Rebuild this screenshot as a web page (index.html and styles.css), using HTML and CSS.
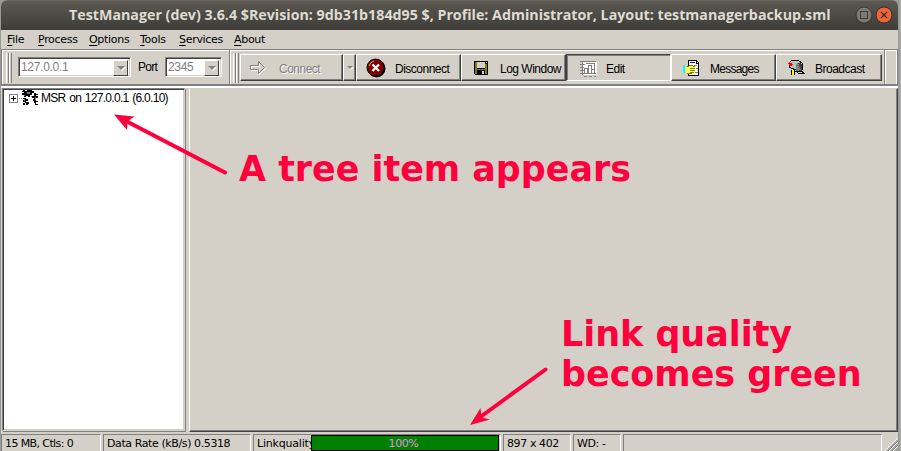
FILE: index.html
```html
<!DOCTYPE html>
<html lang="en">
<head>
<meta charset="utf-8">
<title>TestManager</title>
<link rel="stylesheet" href="styles.css">
</head>
<body>
<div class="window">
  <header class="titlebar">
    <span class="title">TestManager (dev) 3.6.4 $Revision: 9db31b184d95 $, Profile: Administrator, Layout: testmanagerbackup.sml</span>
    <svg class="winbtns" width="38" height="18" viewBox="0 0 38 18">
      <circle cx="9" cy="9" r="8" fill="#7c7a72" stroke="#34332e"/><rect x="5.500" y="5.500" width="7" height="7" fill="none" stroke="#3c3b37"/>
      <circle cx="29" cy="9" r="8" fill="#ee6638" stroke="#34332e"/><path d="M26 6l6 6m0-6l-6 6" stroke="#44281c" stroke-width="1.2"/>
    </svg>
  </header>
  <nav class="menu">
    <span class="m1"><u>F</u>ile</span><span class="m2"><u>P</u>rocess</span><span class="m3"><u>O</u>ptions</span><span class="m4"><u>T</u>ools</span><span class="m5"><u>S</u>ervices</span><span class="m6"><u>A</u>bout</span>
  </nav>
  <div class="toolbar">
    <div class="band address">
      <i class="grip"></i>
      <div class="combo host"><span>127.0.0.1</span><b></b></div>
      <span class="port">Port</span>
      <div class="combo portbox"><span>2345</span><b></b></div>
    </div>
    <div class="band actions">
      <i class="grip"></i>
      <div class="btn connect disabled">
        <svg class="ico" width="17" height="16" viewBox="0 0 17 16"><path d="M1.500 6.500h8v-4l6 6-6 6v-4h-8z" fill="none" stroke="#fff"/><path d="M.5 5.500h8v-4l6 6-6 6v-4h-8z" fill="none" stroke="#808080"/></svg>
        <span>Connect</span></div>
      <div class="btn drop"><b></b></div>
      <div class="btn disconnect">
        <svg class="ico" width="20" height="20" viewBox="0 0 20 20"><circle cx="10.500" cy="10.500" r="9" fill="#000"/><circle cx="9.500" cy="9.500" r="8.500" fill="#800000" stroke="#000"/><path d="M3 8Q4 4 8 3" fill="none" stroke="#d4b0a8"/><path d="M6.500 6.500l6.500 6.500m0-6.500l-6.500 6.500" stroke="#fff" stroke-width="2.400"/></svg>
        <span>Disconnect</span></div>
      <div class="btn log">
        <svg class="ico" width="14" height="14" viewBox="0 0 14 14" shape-rendering="crispEdges"><path d="M0 0h14v14H1l-1-1z"/><path d="M1 1h2v7h8V3h2v10H1z" fill="#808000"/><path d="M3 1h8v6H3z" fill="#d4d0c8"/><path d="M12 1h1v1h-1z" fill="#d4d0c8"/><path d="M3 9h8v5H3z"/><path d="M8 10h2v3H8z" fill="#d4d0c8"/></svg>
        <span>Log Window</span></div>
      <div class="btn edit">
        <svg class="ico" width="17" height="16" viewBox="0 0 17 16" shape-rendering="crispEdges"><path d="M2 1h15v13H2z" fill="#fff"/><path d="M0 0h16v1H0zM2 0h1v14H2zM0 3h5v1H0zM0 6h4v1H0zM0 9h4v1H0zM0 12h16v1H0zM4 7h4v1H4zM4 7h1v6H4zM7 7h1v6H7zM8 4h4v1H8zM8 4h1v9H8zM11 4h1v9h-1zM12 8h3v1h-3zM14 2h1v11h-1zM6 2h8v1H6zM4 15h3v1H4zM9 15h3v1H9zM14 15h2v1h-2z" fill="#808080"/></svg>
        <span>Edit</span></div>
      <div class="btn messages">
        <svg class="ico" width="17" height="16" viewBox="0 0 17 16" shape-rendering="crispEdges"><path d="M5.500.5h8l2 2v13h-10z" fill="#fff" stroke="#000"/><path d="M13 0v3h3" fill="none" stroke="#000"/><path d="M7 2.500h5" stroke="#00f"/><path d="M11 5.500h3M13 8.500h2M12 12.500h3" stroke="#808080"/><path d="M0 5h2v8H0z" fill="#0ff"/><path d="M2 7h3l3-2h2v2h3v2h-1v3h-1v2H5l-3-2z" fill="#ffff60"/><path d="M4 6.500h2M6 5.500h4M10 6.500h2M7 8.500h5M7 10.500h5M7 12.500h4M4 13.500h5" stroke="#808000"/></svg>
        <span>Messages</span></div>
      <div class="btn broadcast">
        <svg class="ico" width="17" height="17" viewBox="0 0 17 17" shape-rendering="crispEdges"><path d="M1 4l3-3h6l4 3v7l-4 1-9-4z" fill="#c0c0c0" stroke="#000"/><path d="M8 5l2-1h3l1 2v6H8z" fill="#404040"/><path d="M8 5l2-1 3 7-5 1z" fill="#808080"/><path d="M1 4l3 3M2 7l2-2" stroke="red" stroke-width="1.500"/><path d="M4 11h2v5H4z" fill="#ff0"/><path d="M3.500 11v5M6.500 11v5M8 12.500h6l2 2h-5z" fill="none" stroke="#000"/></svg>
        <span>Broadcast</span></div>
    </div>
    <div class="band tail"></div>
  </div>
  <main class="work">
    <aside class="tree">
      <div class="item">
        <svg width="29" height="16" viewBox="0 0 29 16" shape-rendering="crispEdges"><rect x=".5" y="4.500" width="8" height="8" fill="#fff" stroke="#808080"/><path d="M2 8.500h5M4.500 6v5" stroke="#000"/><path d="M10 8.500h4" stroke="#808080" stroke-dasharray="1 1"/>
        <path d="M14 0h2v1h2V0h5v1h2v2h-2v2h-2v2h-2V6h-2v1h-2V5h-2V3h2V2h-2zM14 8h3v1h2v2h-2v1h3v2h-1v1h-2v-2h-1v2h-2v-2h2v-1h-2v-2h2V9h-2zM25 3h2v1h2v1h-2v1h2v2h-2v3h2v1h-2v2h2v1h-3v-2h-1v-2h-1V9h1V8h-2V6h2z"/><path d="M18 2h3v2h-3zM15 5h1v1h-1zM22 6h1v1h-1zM15 9h1v2h-1zM26 7h1v3h-1z" fill="#808080"/></svg><span>MSR on 127.0.0.1 (6.0.10)</span>
      </div>
    </aside>
    <section class="canvas"></section>
  </main>
  <footer class="status">
    <div class="s1"><span>15 MB, Ctls: 0</span></div><div class="s2"><span>Data Rate (kB/s) 0.5318</span></div><div class="s3"><span>Linkquality</span><div class="progress"><span>100%</span></div></div><div class="s4"><span>897 x 402</span></div><div class="s5"><span>WD: -</span></div><div class="s6"></div>
    <svg width="13" height="13" viewBox="0 0 13 13"><path d="M0 13L13 0M4 13l9-9M8 13l5-5" stroke="#fff"/><path d="M1.500 13L13 1.500M3 13L13 3M5.500 13L13 5.500M7 13l6-6M9.500 13l3.500-3.500M11 13l2-2" stroke="#808080"/></svg>
  </footer>
</div>
<svg class="arrows" width="901" height="451" viewBox="0 0 901 451" fill="#ff003c" stroke="#ff003c">
  <path d="M225 172.500L126 121M545.500 369.500L481 416.500" stroke-width="4" stroke-linecap="round"/>
  <path d="M114 114.500l20.500 2-7 5-.5 8.500zM470 425l10.500-17 1 9.500 8.500 2z" stroke="none"/>
</svg>
<div class="note note-tree">A tree item appears</div>
<div class="note note-link"><span>Link quality</span><br><span>becomes green</span></div>
</body>
</html>
```
FILE: styles.css
```css
* { box-sizing: border-box; }
body { margin: 0; width: 901px; height: 451px; overflow: hidden; background: linear-gradient(90deg, #999 898px, #989898 899px, #b5b5b5 901px); position: relative; }
.window { margin-left: 1px; width: 897px; height: 451px; background: #d4d0c8; border-radius: 6px 6px 0 0; overflow: hidden; font: 12px "Liberation Sans", sans-serif; color: #000; display: flex; flex-direction: column; }
.titlebar { height: 30px; flex: none; background: linear-gradient(#5b5951, #3d3c38); border-top: 1px solid #6b6961; display: flex; align-items: center; padding: 0 5px 1px 68px; justify-content: space-between; }
.title { font: bold 14.25px/28px "Open Sans", sans-serif; color: #dfdbd2; white-space: nowrap; width: 762px; }
.winbtns { flex: none; }
.menu { height: 19px; flex: none; display: flex; padding-left: 6px; font: 11px/19px "DejaVu Sans", sans-serif; letter-spacing: -.3px; }
.menu span { flex: none; white-space: nowrap; }
.menu u { text-underline-offset: 2px; text-decoration-thickness: 1px; }
.m1 { width: 31px; } .m2 { width: 51px; } .m3 { width: 51px; } .m4 { width: 39px; } .m5 { width: 55px; }
.toolbar { height: 37px; flex: none; display: flex; border: 1px solid #808080; border-bottom: 2px solid #808080; box-shadow: inset 1px 1px #fff, inset -1px 0 #fff; letter-spacing: -.5px; }
.band { display: flex; align-items: flex-start; }
.address { width: 228px; padding: 3px 0 0 4px; border-right: 1px solid #808080; }
.actions { width: 655px; padding: 3px 0 0 2px; border-left: 1px solid #fff; border-right: 1px solid #808080; }
.tail { width: 12px; border-left: 1px solid #fff; }
.grip { width: 6px; height: 30px; flex: none; background: linear-gradient(90deg, #fff 0 1px, #d4d0c8 1px 2px, #808080 2px 3px, #fff 3px 4px, #d4d0c8 4px 5px, #808080 5px 6px); }
.combo { height: 20px; display: flex; background: #fff; border: 1px solid; border-color: #808080 #fff #fff #808080; box-shadow: inset 1px 1px #404040, inset -1px -1px #d4d0c8; padding: 2px; margin-top: 4px; color: #808080; line-height: 15px; letter-spacing: -.3px; }
.combo span { flex: 1; }
.combo b { width: 15px; height: 16px; background: #d4d0c8; border: 1px solid; border-color: #fff #404040 #404040 #fff; display: flex; align-items: center; justify-content: center; }
.combo b::before, .drop b::before { content: ""; display: block; border: 4px solid transparent; border-top-color: #808080; border-bottom: 0; filter: drop-shadow(1px 1px #fff); }
.host { width: 113px; margin-left: 6px; }
.port { width: 27px; margin-left: 7px; line-height: 29px; letter-spacing: -.7px; }
.portbox { width: 57px; }
.btn { height: 27px; margin-top: 1px; display: flex; align-items: center; border: 1px solid; border-color: #fff #404040 #404040 #fff; box-shadow: inset -1px -1px #808080; flex: none; white-space: nowrap; }
.btn span { padding-top: 2px; }
.ico { flex: none; }
.connect { width: 103px; margin-left: 1px; padding-left: 9px; }
.connect span { margin-left: 12px; }
.disabled { color: #808080; text-shadow: 1px 1px #fff; }
.drop { width: 13px; justify-content: center; }
.drop b::before { border-width: 3px 3px 0; }
.disconnect { width: 105px; padding-left: 9px; } .disconnect span { margin-left: 9px; }
.log { width: 105px; padding-left: 12px; } .log span { margin-left: 12px; }
.edit { width: 105px; padding: 3px 0 0 13px; border-color: #404040 #fff #fff #404040; box-shadow: inset 1px 1px #808080; } .edit span { margin-left: 9px; padding-top: 0; }
.messages { width: 105px; padding-left: 11px; } .messages span { margin-left: 10px; letter-spacing: -.75px; }
.broadcast { width: 106px; padding-left: 11px; } .broadcast span { margin-left: 10px; }
.work { height: 346px; flex: none; display: flex; border-top: 2px solid #fff; gap: 4px; }
.tree { width: 183px; height: 343px; background: #fff; border: 1px solid; border-color: #808080 #d4d0c8 #d4d0c8 #808080; box-shadow: inset 1px 1px #404040, inset -1px -1px #d4d0c8, 1px 1px #808080; margin-left: 1px; padding: 1px 0 0 6px; }
.item { display: flex; align-items: flex-start; line-height: 16px; white-space: nowrap; letter-spacing: -.7px; word-spacing: 1px; }
.item svg { flex: none; margin-right: 3px; }
.canvas { width: 709px; height: 344px; border: 1px solid; border-color: #d4d0c8 #404040 #404040 #fff; box-shadow: inset -1px -1px #808080; }
.status { height: 19px; flex: none; display: flex; gap: 2px; padding-top: 2px; font: 11px/17px "DejaVu Sans", sans-serif; letter-spacing: -.4px; }
.status > div { height: 17px; border: 1px solid; border-color: #808080 #fff #fff #808080; border-bottom: 0; padding-left: 3px; white-space: nowrap; overflow: hidden; display: flex; flex: none; }
.s1 { width: 100px; } .s2 { width: 148px; } .s3 { width: 248px; } .s4 { width: 68px; } .s5 { width: 48px; } .status .s6 { width: 259px; }
.s1 span { letter-spacing: -.6px; }
.status .s3 > span { width: 54px; overflow: hidden; flex: none; letter-spacing: -.2px; }
.progress { width: 188px; height: 16px; background: #008000; border: 1px solid #000; color: #e090e0; line-height: 15px; display: flex; justify-content: center; padding-right: 3px; }
.status > svg { margin: 4px 0 0 1px; flex: none; }
.arrows { position: absolute; left: 0; top: 0; }
.note { position: absolute; font: bold 34.9px/40px "DejaVu Sans", sans-serif; color: #ff003c; white-space: nowrap; }
.note-tree { left: 239px; top: 149px; }
.note-link { left: 561px; top: 314px; }
```
